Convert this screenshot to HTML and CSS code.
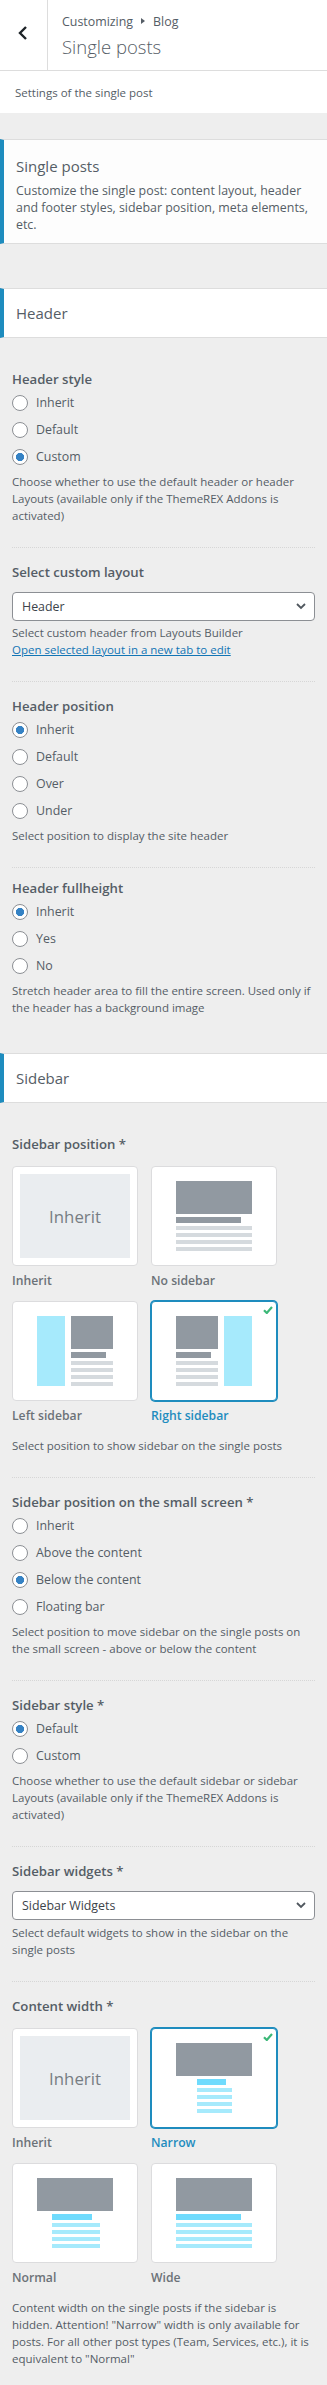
FILE: index.html
```html
<!DOCTYPE html>
<html lang="en">
    <head>
        <meta charset="UTF-8" />
        <meta name="viewport" content="width=device-width, initial-scale=1.0" />
        <title>Customizing: Single posts</title>
        <link rel="stylesheet" href="styles.css">
    </head>
    <body>
        <div class="panel-header">
            <a href="#" class="back-btn" title="Back">
                <svg width="10" height="14" viewBox="0 0 10 14"><path d="M8 1 L2 7 L8 13" /></svg>
            </a>
            <div class="panel-titles">
                <span class="crumbs">Customizing<span class="crumb-arrow"></span>Blog</span>
                <h1 class="panel-title">Single posts</h1>
            </div>
        </div>
        <p class="panel-note">Settings of the single post</p>

        <div class="section-info">
            <h2>Single posts</h2>
            <p>Customize the single post: content layout, header and footer styles, sidebar position, meta elements, etc.</p>
        </div>

        <!-- Header -->
        <h3 class="section-title">Header</h3>
        <ul class="controls">
            <li class="control">
                <span class="control-label">Header style</span>
                <label class="radio"><input type="radio" name="header_style" /><span>Inherit</span></label>
                <label class="radio"><input type="radio" name="header_style" /><span>Default</span></label>
                <label class="radio"><input type="radio" name="header_style" checked /><span>Custom</span></label>
                <p class="control-desc">Choose whether to use the default header or header Layouts (available only if the ThemeREX Addons is activated)</p>
            </li>
            <li class="control">
                <span class="control-label">Select custom layout</span>
                <div class="select">
                    <span>Header</span>
                    <svg width="10" height="7" viewBox="0 0 10 7"><path d="M1 1 L5 5 L9 1" /></svg>
                </div>
                <p class="control-desc">Select custom header from Layouts Builder</p>
                <a href="#" class="control-link">Open selected layout in a new tab to edit</a>
            </li>
            <li class="control">
                <span class="control-label">Header position</span>
                <label class="radio"><input type="radio" name="header_position" checked /><span>Inherit</span></label>
                <label class="radio"><input type="radio" name="header_position" /><span>Default</span></label>
                <label class="radio"><input type="radio" name="header_position" /><span>Over</span></label>
                <label class="radio"><input type="radio" name="header_position" /><span>Under</span></label>
                <p class="control-desc">Select position to display the site header</p>
            </li>
            <li class="control control-tight">
                <span class="control-label">Header fullheight</span>
                <label class="radio"><input type="radio" name="header_fullheight" checked /><span>Inherit</span></label>
                <label class="radio"><input type="radio" name="header_fullheight" /><span>Yes</span></label>
                <label class="radio"><input type="radio" name="header_fullheight" /><span>No</span></label>
                <p class="control-desc">Stretch header area to fill the entire screen. Used only if the header has a background image</p>
            </li>
        </ul>

        <!-- Sidebar -->
        <h3 class="section-title">Sidebar</h3>
        <ul class="controls">
            <li class="control">
                <span class="control-label">Sidebar position *</span>
                <div class="image-grid">
                    <div class="image-opt">
                        <div class="image-card"><div class="image-inherit">Inherit</div></div>
                        <span class="image-label">Inherit</span>
                    </div>
                    <div class="image-opt">
                        <div class="image-card">
                            <svg class="layout" width="76" height="70" viewBox="0 0 76 70">
                                <rect class="dk" x="0" y="0" width="76" height="33" />
                                <rect class="dk" x="0" y="36" width="65" height="6" />
                                <rect class="ln" x="0" y="45" width="76" height="4" />
                                <rect class="ln" x="0" y="52" width="76" height="4" />
                                <rect class="ln" x="0" y="59" width="76" height="4" />
                                <rect class="ln" x="0" y="66" width="76" height="4" />
                            </svg>
                        </div>
                        <span class="image-label">No sidebar</span>
                    </div>
                    <div class="image-opt">
                        <div class="image-card">
                            <svg class="layout" width="76" height="70" viewBox="0 0 76 70">
                                <rect class="sd" x="0" y="0" width="28" height="70" />
                                <rect class="dk" x="34" y="0" width="42" height="33" />
                                <rect class="dk" x="34" y="36" width="35" height="6" />
                                <rect class="ln" x="34" y="45" width="42" height="4" />
                                <rect class="ln" x="34" y="52" width="42" height="4" />
                                <rect class="ln" x="34" y="59" width="42" height="4" />
                                <rect class="ln" x="34" y="66" width="42" height="4" />
                            </svg>
                        </div>
                        <span class="image-label">Left sidebar</span>
                    </div>
                    <div class="image-opt is-selected">
                        <div class="image-card">
                            <svg class="check" width="10" height="8" viewBox="0 0 10 8"><path d="M1 4.2 L3.8 7 L9 1" /></svg>
                            <svg class="layout" width="76" height="70" viewBox="0 0 76 70">
                                <rect class="dk" x="0" y="0" width="42" height="33" />
                                <rect class="dk" x="0" y="36" width="35" height="6" />
                                <rect class="ln" x="0" y="45" width="42" height="4" />
                                <rect class="ln" x="0" y="52" width="42" height="4" />
                                <rect class="ln" x="0" y="59" width="42" height="4" />
                                <rect class="ln" x="0" y="66" width="42" height="4" />
                                <rect class="sd" x="48" y="0" width="28" height="70" />
                            </svg>
                        </div>
                        <span class="image-label">Right sidebar</span>
                    </div>
                </div>
                <p class="control-desc image-desc">Select position to show sidebar on the single posts</p>
            </li>
            <li class="control">
                <span class="control-label">Sidebar position on the small screen *</span>
                <label class="radio"><input type="radio" name="sidebar_small" /><span>Inherit</span></label>
                <label class="radio"><input type="radio" name="sidebar_small" /><span>Above the content</span></label>
                <label class="radio"><input type="radio" name="sidebar_small" checked /><span>Below the content</span></label>
                <label class="radio"><input type="radio" name="sidebar_small" /><span>Floating bar</span></label>
                <p class="control-desc">Select position to move sidebar on the single posts on the small screen - above or below the content</p>
            </li>
            <li class="control">
                <span class="control-label">Sidebar style *</span>
                <label class="radio"><input type="radio" name="sidebar_style" checked /><span>Default</span></label>
                <label class="radio"><input type="radio" name="sidebar_style" /><span>Custom</span></label>
                <p class="control-desc">Choose whether to use the default sidebar or sidebar Layouts (available only if the ThemeREX Addons is activated)</p>
            </li>
            <li class="control">
                <span class="control-label">Sidebar widgets *</span>
                <div class="select">
                    <span>Sidebar Widgets</span>
                    <svg width="10" height="7" viewBox="0 0 10 7"><path d="M1 1 L5 5 L9 1" /></svg>
                </div>
                <p class="control-desc select-desc">Select default widgets to show in the sidebar on the single posts</p>
            </li>
            <li class="control">
                <span class="control-label">Content width *</span>
                <div class="image-grid">
                    <div class="image-opt">
                        <div class="image-card"><div class="image-inherit">Inherit</div></div>
                        <span class="image-label">Inherit</span>
                    </div>
                    <div class="image-opt is-selected">
                        <div class="image-card">
                            <svg class="check" width="10" height="8" viewBox="0 0 10 8"><path d="M1 4.2 L3.8 7 L9 1" /></svg>
                            <svg class="layout" width="76" height="70" viewBox="0 0 76 70">
                                <rect class="dk" x="0" y="0" width="76" height="33" />
                                <rect class="br" x="21" y="36" width="29" height="6" />
                                <rect class="sd" x="21" y="45" width="35" height="4" />
                                <rect class="sd" x="21" y="52" width="35" height="4" />
                                <rect class="sd" x="21" y="59" width="35" height="4" />
                                <rect class="sd" x="21" y="66" width="35" height="4" />
                            </svg>
                        </div>
                        <span class="image-label">Narrow</span>
                    </div>
                    <div class="image-opt">
                        <div class="image-card">
                            <svg class="layout" width="76" height="70" viewBox="0 0 76 70">
                                <rect class="dk" x="0" y="0" width="76" height="33" />
                                <rect class="br" x="15" y="36" width="40" height="6" />
                                <rect class="sd" x="15" y="45" width="48" height="4" />
                                <rect class="sd" x="15" y="52" width="48" height="4" />
                                <rect class="sd" x="15" y="59" width="48" height="4" />
                                <rect class="sd" x="15" y="66" width="48" height="4" />
                            </svg>
                        </div>
                        <span class="image-label">Normal</span>
                    </div>
                    <div class="image-opt">
                        <div class="image-card">
                            <svg class="layout" width="76" height="70" viewBox="0 0 76 70">
                                <rect class="dk" x="0" y="0" width="76" height="33" />
                                <rect class="br" x="0" y="36" width="65" height="6" />
                                <rect class="sd" x="0" y="45" width="76" height="4" />
                                <rect class="sd" x="0" y="52" width="76" height="4" />
                                <rect class="sd" x="0" y="59" width="76" height="4" />
                                <rect class="sd" x="0" y="66" width="76" height="4" />
                            </svg>
                        </div>
                        <span class="image-label">Wide</span>
                    </div>
                </div>
                <p class="control-desc image-desc">Content width on the single posts if the sidebar is hidden. Attention! "Narrow" width is only available for posts. For all other post types (Team, Services, etc.), it is equivalent to "Normal"</p>
            </li>
        </ul>
    </body>
</html>
```

FILE: styles.css
```css
* {
    margin: 0;
    padding: 0;
    box-sizing: border-box;
}

body {
    font-family: "Open Sans", "Noto Sans", sans-serif;
    background-color: #eeeeee;
    color: #555d66;
}

/* top bar with back button */
.panel-header {
    display: flex;
    height: 71px;
    background-color: #fff;
    border-bottom: 1px solid #dddddd;
}

.back-btn {
    display: block;
    flex-shrink: 0;
    width: 48px;
    padding: 26px 0 0 18px;
    border-right: 1px solid #dddddd;
}

.back-btn svg {
    display: block;
    fill: none;
    stroke: #1d2327;
    stroke-width: 2.4;
}

.panel-titles {
    padding: 12px 0 0 14px;
}

.crumbs {
    display: flex;
    align-items: center;
    height: 18px;
    font-size: 12.4px;
}

.crumb-arrow {
    width: 0;
    height: 0;
    margin: 0 8px;
    border-left: 4px solid #555d66;
    border-top: 3px solid transparent;
    border-bottom: 3px solid transparent;
}

.panel-title {
    margin-top: 4px;
    font-size: 18.5px;
    font-weight: 300;
    line-height: 26px;
}

.panel-note {
    background-color: #fff;
    padding: 13px 15px 12px;
    font-size: 11.5px;
    line-height: 17px;
}

/* section boxes */
.section-info {
    margin: 26px 0 44px;
    padding: 16px 12px 10px;
    background-color: #fdfdfd;
    border-top: 1px solid #dddddd;
    border-bottom: 1px solid #dddddd;
    border-left: 4px solid #1e8cbe;
}

.section-info h2 {
    margin-bottom: 6px;
    font-size: 15px;
    font-weight: 400;
    line-height: 20px;
}

.section-info p {
    font-size: 12.4px;
    line-height: 17px;
}

.section-title {
    padding: 14px 12px;
    background-color: #fff;
    border-top: 1px solid #dddddd;
    border-bottom: 1px solid #dddddd;
    border-left: 4px solid #1e8cbe;
    font-size: 15px;
    font-weight: 400;
    line-height: 20px;
}

/* controls */
.controls {
    list-style: none;
    padding: 17px 12px 14px;
}

.control {
    padding: 14px 0 23px;
}

.control + .control {
    border-top: 1px dotted #d6d6d6;
}

.control-tight {
    padding-top: 10px;
}

.control-label {
    display: block;
    font-size: 13.2px;
    font-weight: 600;
    line-height: 20px;
}

.radio {
    display: flex;
    align-items: center;
    gap: 8px;
    height: 27px;
    font-size: 12.4px;
}

.radio input {
    appearance: none;
    -webkit-appearance: none;
    flex-shrink: 0;
    width: 16px;
    height: 16px;
    border: 1px solid #8c8f94;
    border-radius: 50%;
    background-color: #fff;
}

.radio input:checked {
    background: radial-gradient(circle, #3582c4 0 3.8px, #fff 4.4px);
}

.control-desc {
    margin-top: 3px;
    font-size: 11.5px;
    line-height: 17px;
}

.control-link {
    display: block;
    font-size: 11.5px;
    line-height: 17px;
    color: #1275b5;
}

.select {
    display: flex;
    align-items: center;
    justify-content: space-between;
    height: 29px;
    margin-top: 10px;
    padding: 0 8px 0 9px;
    background-color: #fff;
    border: 1px solid #8c8f94;
    border-radius: 4px;
    font-size: 12.4px;
    color: #3c434a;
}

.select svg {
    fill: none;
    stroke: #50575e;
    stroke-width: 1.8;
}

.select-desc {
    margin-top: 4px;
}

/* image choices */
.image-grid {
    display: grid;
    grid-template-columns: 126px 126px;
    column-gap: 13px;
    row-gap: 10px;
    margin-top: 12px;
}

.image-card {
    position: relative;
    display: flex;
    align-items: center;
    justify-content: center;
    width: 126px;
    height: 100px;
    padding: 7px;
    background-color: #fff;
    border: 1px solid #dcdcde;
    border-radius: 4px;
}

.image-inherit {
    display: flex;
    align-items: center;
    justify-content: center;
    width: 110px;
    height: 84px;
    background-color: #eaedf0;
    color: #777d83;
    font-size: 16.8px;
}

.image-label {
    display: block;
    margin-top: 5px;
    font-size: 12.2px;
    font-weight: 600;
    line-height: 20px;
    color: #6c7278;
}

.is-selected .image-card {
    border-color: #1e8cbe;
    box-shadow: 0 0 0 1px #1e8cbe;
}

.is-selected .image-label {
    color: #1e8cbe;
}

.check {
    position: absolute;
    top: 4px;
    right: 3px;
    fill: none;
    stroke: #3cb878;
    stroke-width: 2.2;
}

.layout .dk { fill: #9199a1; }
.layout .ln { fill: #d5dade; }
.layout .sd { fill: #a6eafc; }
.layout .br { fill: #6fdbfd; }

.image-desc {
    margin-top: 11px;
}
```
